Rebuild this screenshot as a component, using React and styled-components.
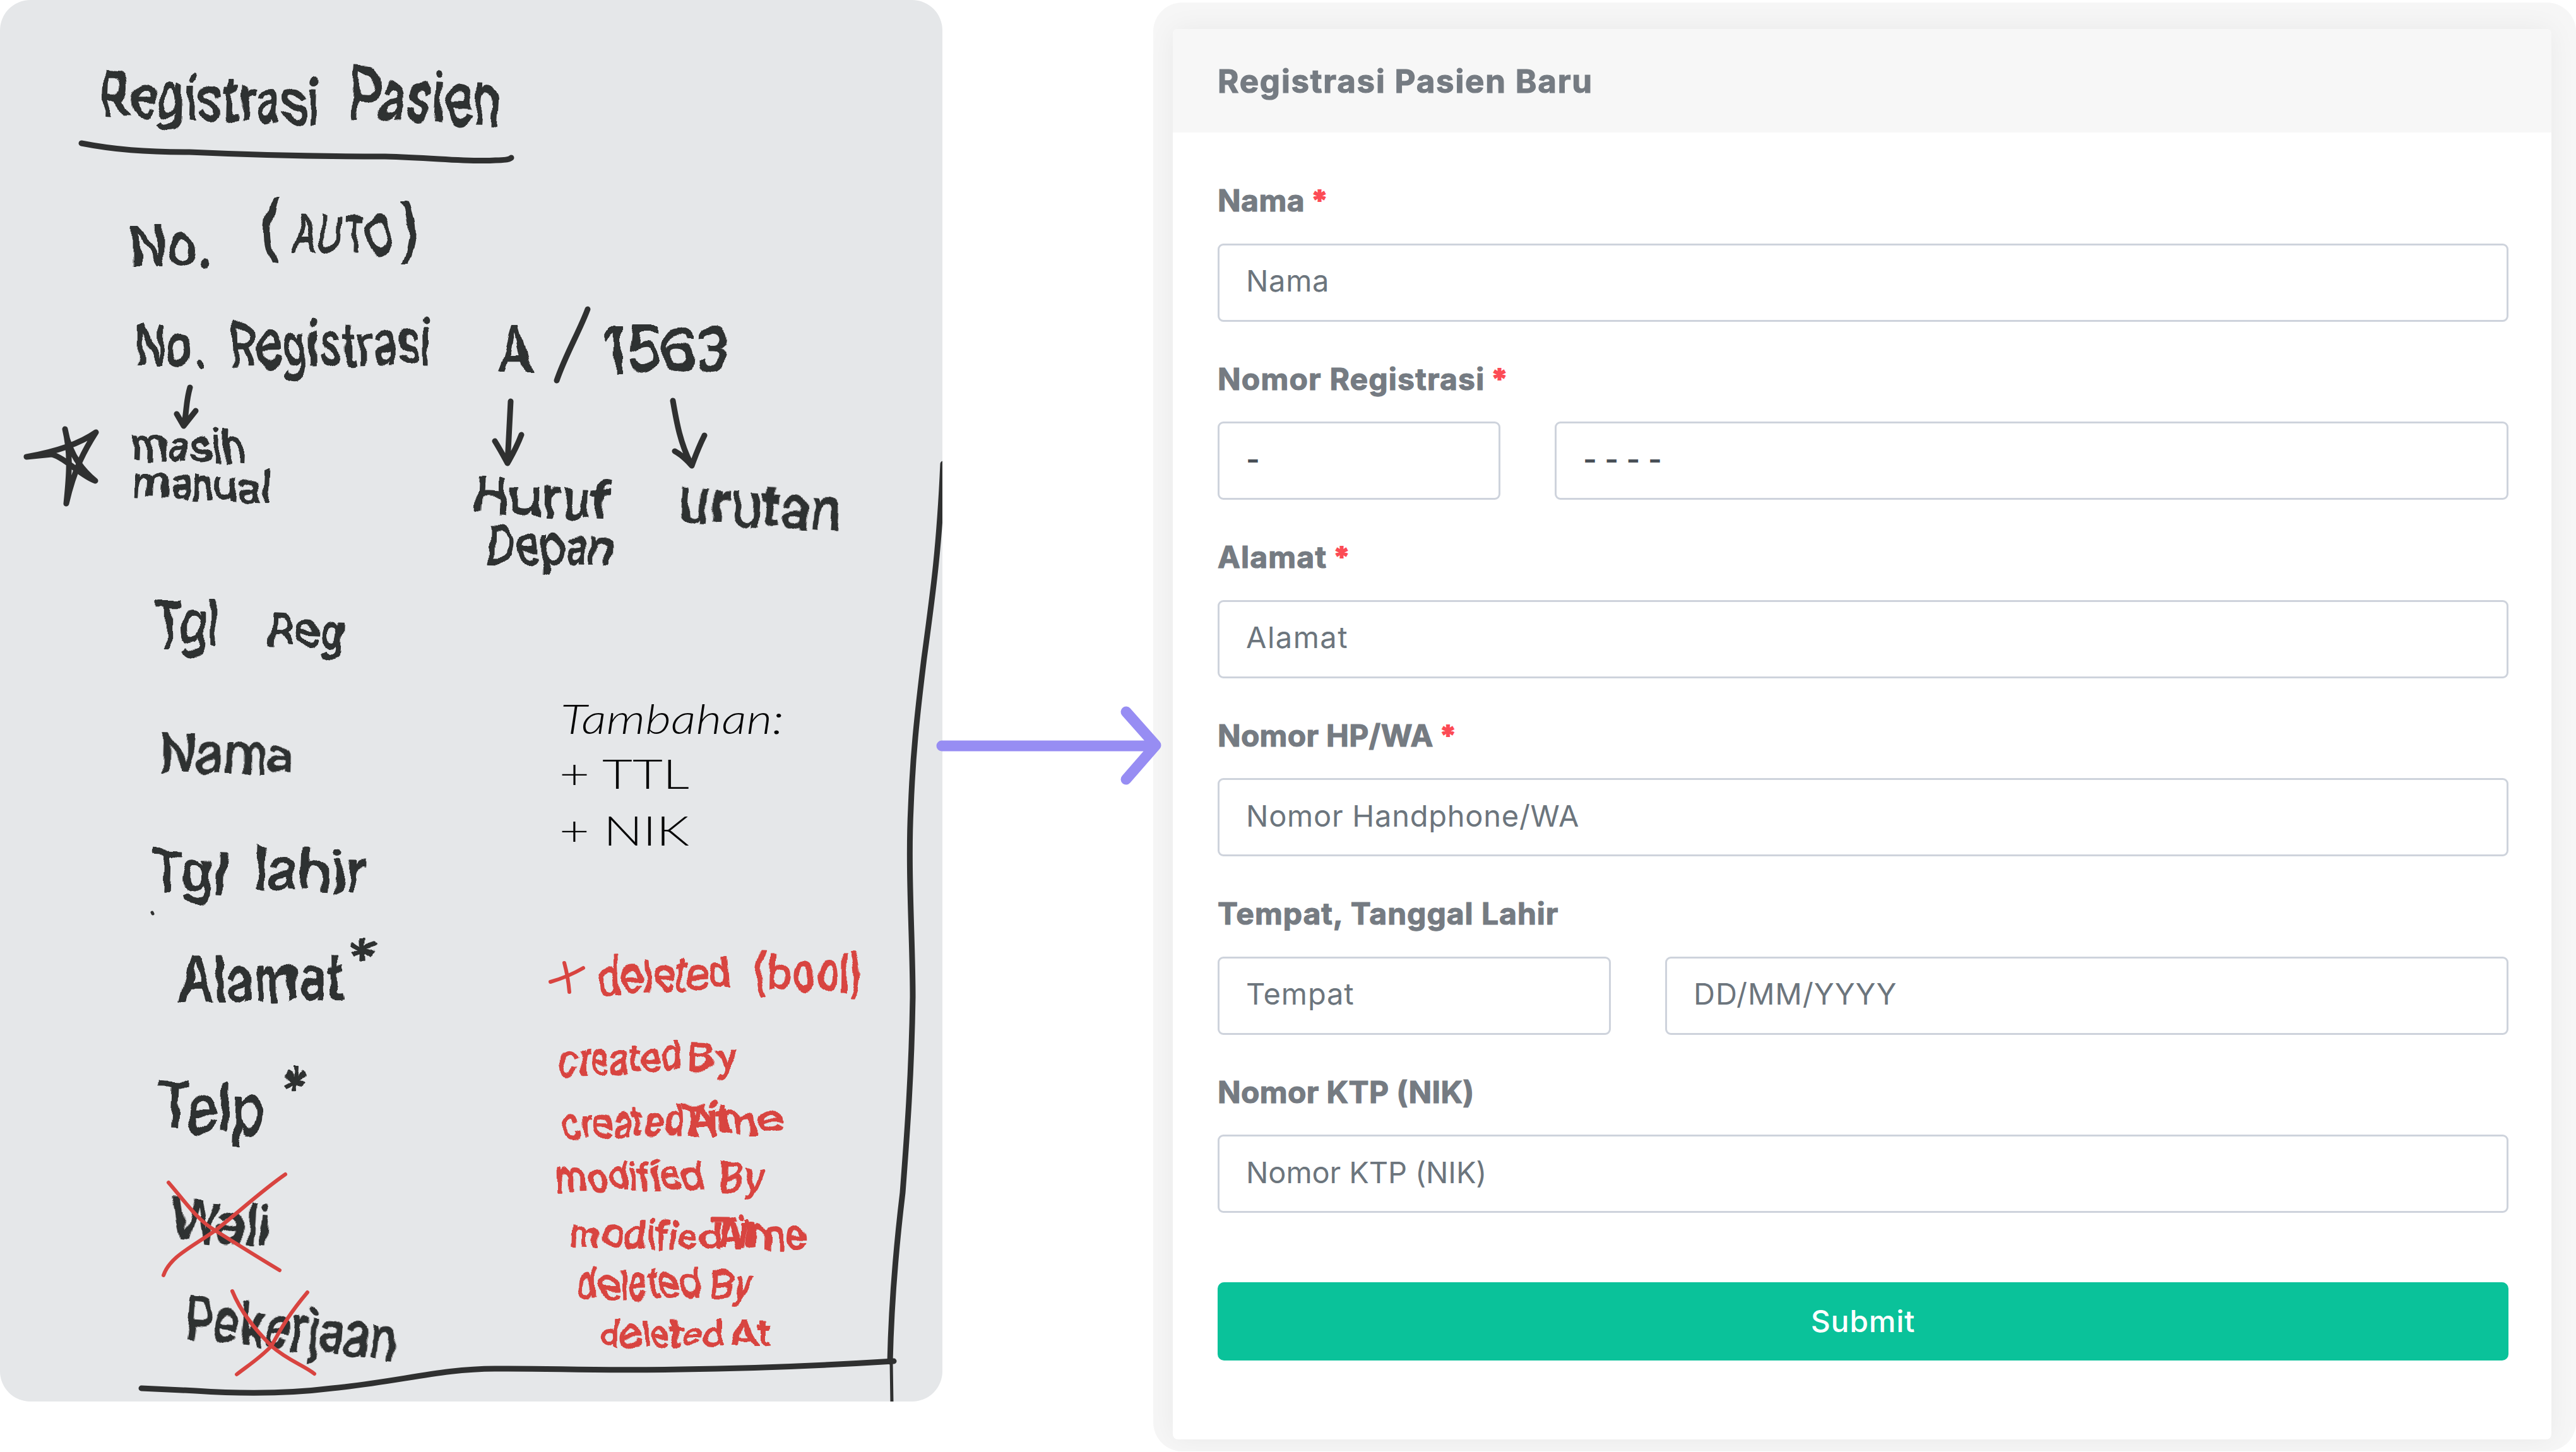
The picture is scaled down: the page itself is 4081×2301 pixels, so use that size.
import React from "react";
import styled, { createGlobalStyle } from "styled-components";

const GlobalStyle = createGlobalStyle`
  *, *::before, *::after { box-sizing: border-box; }
  body { margin: 0; background: #fff; }
`;

const Page = styled.main`
  display: flex;
  width: 4081px;
  height: 2301px;
  overflow: hidden;
  background: #fff;
  font-family: Inter, Roboto, "Liberation Sans", sans-serif;
`;

const SketchPanel = styled.section`
  flex: none;
  width: 1493px;
  height: 2221px;
  border-radius: 48px;
  overflow: hidden;
  background: #e5e7e9;
`;

const Drawing = styled.svg`
  display: block;
  width: 1493px;
  height: 2221px;
  fill: none;
  stroke-linecap: round;
  stroke-linejoin: round;
`;

const Ink = styled.g`
  stroke: ${(p) => p.$color};
  stroke-width: ${(p) => p.$width}px;
`;

const Word = styled.text`
  font-family: ${(p) => (p.$thin ? "Lato" : "Inter")}, "Open Sans", sans-serif;
  font-weight: ${(p) => (p.$thin ? 300 : 500)};
  font-style: ${(p) => (p.$slanted ? "italic" : "normal")};
  font-size: ${(p) => p.$size}px;
  fill: ${(p) => p.$color};
  stroke: ${(p) => (p.$thin ? "none" : p.$color)};
  stroke-width: 1.8px;
`;

const Connector = styled.div`
  flex: none;
  width: 334px;
  height: 2301px;
  padding-top: 1111px;
  position: relative;
  z-index: 1;
`;

const ConnectorArrow = styled.svg`
  display: block;
  width: 334px;
  height: 142px;
  overflow: visible;
  fill: none;
  stroke: #978df3;
  stroke-width: 17px;
  stroke-linecap: round;
  stroke-linejoin: round;
`;

const Frame = styled.section`
  flex: none;
  width: 2254px;
  height: 2296px;
  margin-top: 4px;
  padding: 42px 39px 19px 31px;
  border-radius: 46px;
  overflow: hidden;
  background: #f6f6f6;
`;

const Card = styled.form`
  height: 2235px;
  border-radius: 8px;
  background: #fff;
  box-shadow: 0 0 44px rgba(0, 0, 0, 0.055);
`;

const CardHeader = styled.header`
  display: flex;
  align-items: center;
  height: 164px;
  padding: 2px 71px 0;
  border-radius: 8px 8px 0 0;
  background: #f7f7f7;
`;

const Title = styled.h1`
  margin: 0;
  font-size: 51px;
  line-height: 62px;
  font-weight: 700;
  letter-spacing: 1.8px;
  -webkit-text-stroke: 1.2px #757b82;
  color: #757b82;
`;

const CardBody = styled.div`
  display: flex;
  flex-direction: column;
  padding: 78px 68px 0 71px;
`;

const Field = styled.div`
  height: 282.5px;
`;

const Label = styled.label`
  display: flex;
  gap: 11px;
  height: 97.5px;
  line-height: 59px;
  font-size: 48px;
  font-weight: 700;
  letter-spacing: ${(p) => p.$track || 0}px;
  -webkit-text-stroke: 1.2px currentColor;
  color: #757b82;
`;

const Required = styled.span`
  color: #fc4b55;
  font-size: 44px;
  -webkit-text-stroke: 2px #fc4b55;
`;

const Inputs = styled.div`
  display: grid;
  grid-template-columns: ${(p) => p.$columns || "1fr"};
  gap: 86px;
`;

const Input = styled.input`
  width: 100%;
  height: 124px;
  padding: 0 42px 6px;
  border: 3px solid #ced3dc;
  border-radius: 9px;
  outline: 0;
  background: #fff;
  font: ${(p) => (p.defaultValue ? 600 : 400)} 47px Inter, Roboto, sans-serif;
  letter-spacing: ${(p) => p.$track || 0}px;
  color: #495057;
  &::placeholder { color: #6c757d; opacity: 1; }
`;

const Submit = styled.button`
  height: 124px;
  margin-top: 49px;
  padding: 0 0 2px;
  border: 0;
  border-radius: 10px;
  background: #0ac29a;
  color: #fff;
  font: 500 48px Inter, Roboto, sans-serif;
  letter-spacing: 0.8px;
`;

const BLACK = "#2f3030";
const RED = "#d84440";

/* text, x, baseline, width, font size, tilt in degrees */
const blackWords = [
  ["Registrasi", 158, 184, 346, 98, 2],
  ["Pasien", 551, 188, 242, 114, 3],
  ["No.", 204, 421, 132, 90, 0],
  ["(", 410, 401, 32, 108, 0],
  ["AUTO", 463, 399, 156, 84, 2],
  [")", 634, 403, 34, 108, 0],
  ["No.", 213, 580, 112, 91, 0],
  ["Registrasi", 363, 582, 320, 98, -1],
  ["A", 788, 590, 56, 102, 0],
  ["1563", 956, 589, 200, 96, 0],
  ["masih", 207, 727, 182, 68, 2],
  ["manual", 211, 786, 219, 68, 3],
  ["Huruf", 748, 815, 220, 82, 2],
  ["urutan", 1072, 824, 260, 90, 4],
  ["Depan", 770, 892, 202, 82, 1],
  ["Tgl", 242, 1022, 104, 98, 0],
  ["Reg", 424, 1022, 123, 76, 3],
  ["Nama", 252, 1223, 214, 82, 1],
  ["Tgl", 236, 1410, 124, 86, 2],
  ["lahir", 402, 1408, 178, 90, 2],
  ["Alamat", 282, 1588, 263, 98, -1],
  ["*", 552, 1550, 45, 90, 0],
  ["Telp", 246, 1790, 172, 106, 2],
  ["*", 448, 1756, 42, 84, 0],
  ["Wali", 270, 1962, 156, 86, 4],
  ["Pekerjaan", 290, 2120, 338, 92, 6],
];

const redWords = [
  ["deleted", 948, 1577, 214, 76, -3],
  ["(bool)", 1192, 1568, 176, 80, 1],
  ["created", 886, 1706, 196, 68, -3],
  ["By", 1090, 1697, 76, 66, 2],
  ["created", 890, 1804, 192, 64, -2],
  ["Time", 1076, 1798, 168, 66, -1],
  ["At", 1090, 1798, 68, 62, 0],
  ["modified", 881, 1888, 234, 62, -1],
  ["By", 1138, 1886, 72, 60, 3],
  ["modified", 901, 1974, 242, 62, 2],
  ["Time", 1126, 1977, 156, 66, 1],
  ["At", 1136, 1979, 62, 62, 0],
  ["deleted", 916, 2058, 194, 64, -1],
  ["By", 1126, 2055, 66, 60, 2],
  ["deleted", 950, 2134, 196, 58, 0],
  ["At", 1156, 2134, 66, 58, 0],
];

const typedNotes = [
  ["Tambahan:", 888, 1163, 354, 66, 0, true],
  ["+ TTL", 886, 1250, 206, 66, 0],
  ["+ NIK", 886, 1340, 206, 66, 0],
];

function Words({ list, color, thin }) {
  return list.map(([text, x, y, width, size, tilt, slanted], i) => (
    <Word
      key={i}
      x={x}
      y={y}
      $size={size}
      $color={color}
      $thin={thin}
      $slanted={slanted}
      textLength={width}
      lengthAdjust="spacingAndGlyphs"
      transform={`rotate(${tilt} ${x} ${y})`}
    >
      {text}
    </Word>
  ));
}

function Sketch() {
  return (
    <SketchPanel>
      <Drawing viewBox="0 0 1493 2221">
        <defs>
          <filter id="pen" x="0" y="0" width="1493" height="2221" filterUnits="userSpaceOnUse">
            <feTurbulence type="fractalNoise" baseFrequency="0.024" numOctaves="2" seed="4" />
            <feDisplacementMap in="SourceGraphic" scale="20" xChannelSelector="R" yChannelSelector="G" />
          </filter>
        </defs>
        <g filter="url(#pen)">
          <Words list={blackWords} color={BLACK} />
          <Words list={redWords} color={RED} />
        </g>
        <Ink $color={BLACK} $width={9}>
          <path d="M129 227 C180 237 230 241 300 241 C410 246 520 248 610 248 C690 250 740 257 785 254 Q806 254 810 250" />
          <path d="M931 490 C918 525 896 562 882 603" />
          <path d="M301 614 C294 638 296 654 291 675 M280 656 L291 675 L310 651" />
          <path d="M809 636 L804 734 M784 699 Q792 712 804 734 Q818 710 826 689" />
          <path d="M1066 635 C1072 670 1078 704 1096 738 M1069 715 Q1082 722 1096 738 Q1106 710 1116 690" />
          <path d="M103 680 C108 710 122 738 151 762 C128 754 104 726 82 720 L42 724 C88 716 125 704 152 685 C136 710 118 741 105 798 C110 750 112 718 103 680" />
          <path d="M224 2200 L310 2204 Q430 2212 526 2200 C630 2190 700 2169 784 2169 C880 2168 930 2173 1080 2170 Q1240 2168 1416 2157" />
          <path d="M1494 735 C1488 870 1478 940 1464 1043 C1452 1140 1446 1200 1443 1280 C1438 1380 1446 1490 1446 1580 C1444 1710 1436 1810 1430 1890 C1418 1990 1412 2070 1410 2158" />
        </Ink>
        <Ink $color={BLACK} $width={5}>
          <path d="M1412 2158 L1413 2224" />
          <path d="M241 1446 l1 2" />
        </Ink>
        <Ink $color={RED} $width={6}>
          <path d="M267 1874 C294 1905 312 1933 341 1950 C376 1972 408 1992 443 2013 M452 1861 C413 1888 377 1922 341 1950 C301 1978 269 1992 259 2021" />
          <path d="M368 2046 C382 2080 404 2107 430 2133 C456 2156 482 2164 498 2177 M487 2048 C460 2080 448 2100 430 2133 C412 2152 393 2164 375 2178" />
          <path d="M872 1556 Q900 1548 924 1534 M894 1526 Q900 1548 902 1572" />
        </Ink>
        <Words list={typedNotes} color="#050505" thin />
      </Drawing>
    </SketchPanel>
  );
}

function FormField({ label, required, columns, track, inputs }) {
  return (
    <Field>
      <Label $track={track}>
        {label}
        {required && <Required>*</Required>}
      </Label>
      <Inputs $columns={columns}>
        {inputs.map((input, i) => (
          <Input
            key={i}
            placeholder={input.placeholder}
            defaultValue={input.value}
            $track={input.track}
          />
        ))}
      </Inputs>
    </Field>
  );
}

const fields = [
  { label: "Nama", required: true, track: 0.5, inputs: [{ placeholder: "Nama", track: 0.7 }] },
  {
    label: "Nomor Registrasi",
    required: true,
    track: 1.2,
    columns: "448px 1fr",
    inputs: [{ value: "-" }, { value: "- - - -", track: 0.3 }],
  },
  { label: "Alamat", required: true, track: 1.2, inputs: [{ placeholder: "Alamat", track: 1.5 }] },
  {
    label: "Nomor HP/WA",
    required: true,
    track: 0.3,
    inputs: [{ placeholder: "Nomor Handphone/WA", track: 0.75 }],
  },
  {
    label: "Tempat, Tanggal Lahir",
    track: 1,
    columns: "623px 1fr",
    inputs: [
      { placeholder: "Tempat", track: 0.9 },
      { placeholder: "DD/MM/YYYY", track: 1 },
    ],
  },
  { label: "Nomor KTP (NIK)", track: 0.4, inputs: [{ placeholder: "Nomor KTP (NIK)", track: -0.1 }] },
];

export default function App() {
  return (
    <Page>
      <GlobalStyle />
      <Sketch />
      <Connector>
        <ConnectorArrow viewBox="0 0 334 142">
          <path d="M-1 71 H336 M291 17 L338 70 L291 124" />
        </ConnectorArrow>
      </Connector>
      <Frame>
        <Card>
          <CardHeader>
            <Title>Registrasi Pasien Baru</Title>
          </CardHeader>
          <CardBody>
            {fields.map((field) => (
              <FormField key={field.label} {...field} />
            ))}
            <Submit type="button">Submit</Submit>
          </CardBody>
        </Card>
      </Frame>
    </Page>
  );
}
